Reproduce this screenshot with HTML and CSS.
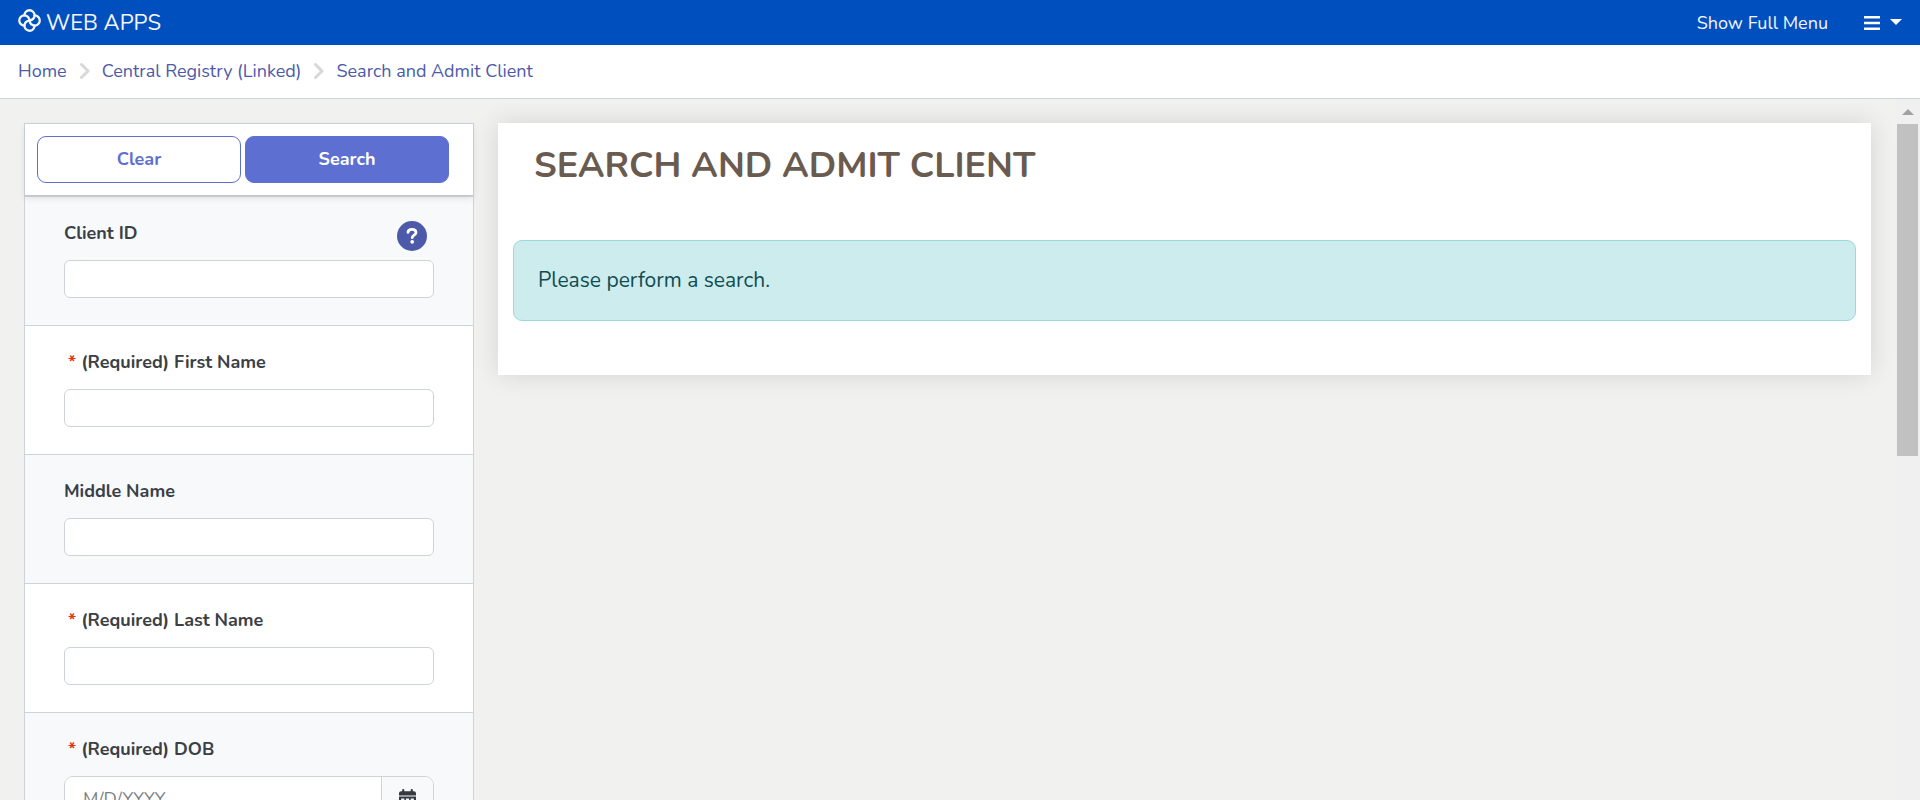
FILE: index.html
```html
<!DOCTYPE html>
<html lang="en">
<head>
<meta charset="utf-8">
<meta name="viewport" content="width=device-width, initial-scale=1">
<title>Search and Admit Client</title>
<link rel="stylesheet" href="styles.css">
</head>
<body>
<header class="topbar">
  <a class="brand" href="#">
    <svg class="brand-logo" viewBox="0 0 24 24" aria-hidden="true">
      <g fill="none" stroke="currentColor" stroke-width="2.4" stroke-linecap="round">
        <path d="M6.700 6.700A5.300 5.300 0 1 1 12 11.900"/>
        <path d="M17.300 6.700A5.300 5.300 0 1 1 12.100 12"/>
        <path d="M17.300 17.300A5.300 5.300 0 1 1 12 12.100"/>
        <path d="M6.700 17.300A5.300 5.300 0 1 1 11.900 12"/>
      </g>
    </svg>
    <span>WEB APPS</span>
  </a>
  <nav class="top-actions" aria-label="Main">
    <a class="full-menu" href="#">Show Full Menu</a>
    <button class="menu-toggle" type="button" aria-label="Menu">
      <svg class="bars" viewBox="0 0 16 14" aria-hidden="true"><path d="M0 0h16v2.500H0zM0 5.800h16v2.500H0zM0 11.500h16v2.500H0z" fill="currentColor"/></svg>
      <svg class="caret" viewBox="0 0 12 6" aria-hidden="true"><path d="M0 0h12L6 6z" fill="currentColor"/></svg>
    </button>
  </nav>
</header>
<nav class="crumbs" aria-label="Breadcrumb">
  <a href="#">Home</a>
  <svg class="chevron" viewBox="0 0 11 16" aria-hidden="true"><path d="M2.500 1.500L9 8l-6.500 6.500"/></svg>
  <a href="#">Central Registry (Linked)</a>
  <svg class="chevron" viewBox="0 0 11 16" aria-hidden="true"><path d="M2.500 1.500L9 8l-6.500 6.500"/></svg>
  <a href="#">Search and Admit Client</a>
</nav>
<div class="workspace">
  <form class="search-panel">
    <div class="panel-actions">
      <button class="btn btn-outline" type="reset">Clear</button>
      <button class="btn btn-solid" type="button">Search</button>
    </div>
    <div class="field">
      <div class="field-head">
        <label for="client-id">Client ID</label>
        <button class="help" type="button" aria-label="Help">
          <svg viewBox="0 0 30 30" aria-hidden="true">
            <circle cx="15" cy="15" r="15" fill="currentColor"/>
            <path d="M11 11.400C11 8.800 12.800 8.300 15 8.300c2.500 0 4 1.300 4 3.200 0 2.600-3.800 2.600-3.800 5.200" fill="none" stroke="#fff" stroke-width="2.800" stroke-linecap="round"/>
            <circle cx="15.200" cy="20.800" r="1.900" fill="#fff"/>
          </svg>
        </button>
      </div>
      <input class="text-input" id="client-id" type="text">
    </div>
    <div class="field">
      <div class="field-head"><label for="first-name"><span class="star">*</span>(Required) First Name</label></div>
      <input class="text-input" id="first-name" type="text">
    </div>
    <div class="field">
      <div class="field-head"><label for="middle-name">Middle Name</label></div>
      <input class="text-input" id="middle-name" type="text">
    </div>
    <div class="field">
      <div class="field-head"><label for="last-name"><span class="star">*</span>(Required) Last Name</label></div>
      <input class="text-input" id="last-name" type="text">
    </div>
    <div class="field">
      <div class="field-head"><label for="dob"><span class="star">*</span>(Required) DOB</label></div>
      <div class="date-group">
        <input class="date-input" id="dob" type="text" placeholder="M/D/YYYY">
        <button class="date-button" type="button" aria-label="Choose date">
          <svg viewBox="0 0 16 18" aria-hidden="true"><path fill="currentColor" fill-rule="evenodd" d="M0 6V4q0-2 2-2h1V1q0-1 1-1t1 1v1h6V1q0-1 1-1t1 1v1h1q2 0 2 2v2zM0 7h16v9q0 2-2 2H2q-2 0-2-2zM2 9v2h3V9zm4.500 0v2h3V9zM11 9v2h3V9zM2 13v2h3v-2zm4.500 0v2h3v-2zm4.500 0v2h3v-2z"/></svg>
        </button>
      </div>
    </div>
  </form>
  <main class="results">
    <h1>SEARCH AND ADMIT CLIENT</h1>
    <p class="notice" role="status">Please perform a search.</p>
  </main>
  <div class="scroll-track" aria-hidden="true">
    <svg class="scroll-arrow" viewBox="0 0 12 6"><path d="M0 6L6 0l6 6z" fill="currentColor"/></svg>
    <div class="scroll-thumb"></div>
  </div>
</div>
</body>
</html>
```

FILE: styles.css
```css
* {
  box-sizing: border-box;
}

body {
  margin: 0;
  height: 100vh;
  display: flex;
  flex-direction: column;
  overflow: hidden;
  background: #f1f1ef;
  color: #3a4046;
  font-family: Nunito, Lato, "Noto Sans", sans-serif;
  font-size: 18px;
  line-height: 24px;
}

a {
  color: inherit;
  text-decoration: none;
}

button,
input {
  font: inherit;
}

svg {
  display: block;
}

.topbar {
  flex: none;
  display: flex;
  align-items: center;
  justify-content: space-between;
  min-height: 45px;
  padding: 0 18px;
  background: #004fbe;
  color: #f4f6fa;
}

.brand {
  display: flex;
  align-items: center;
  gap: 5px;
  font-size: 22px;
  line-height: 26px;
}

.brand-logo {
  width: 23px;
  height: 23px;
  margin-bottom: 4px;
}

.top-actions {
  display: flex;
  align-items: center;
  gap: 36px;
}

.menu-toggle {
  display: flex;
  align-items: center;
  gap: 10px;
  padding: 0;
  border: 0;
  background: none;
  color: #fff;
}

.bars {
  width: 16px;
  height: 14px;
}

.caret {
  width: 12px;
  height: 6px;
  margin-bottom: 2px;
}

.crumbs {
  flex: none;
  display: flex;
  align-items: center;
  gap: 12px;
  min-height: 54px;
  padding: 0 18px 2px;
  border-bottom: 1px solid #ced3da;
  background: #fff;
  color: #4c5aa9;
}

.chevron {
  width: 11px;
  height: 16px;
  fill: none;
  stroke: #d8d8d8;
  stroke-width: 3;
  stroke-linecap: round;
  stroke-linejoin: round;
}

.workspace {
  flex: 1;
  min-height: 0;
  display: grid;
  grid-template-columns: 1fr 3fr 24px;
  align-items: start;
  overflow: hidden;
}

.search-panel {
  margin: 24px 0 0 24px;
  border: 1px solid #ced3da;
  background: #fff;
}

.panel-actions {
  position: relative;
  display: grid;
  grid-template-columns: 1fr 1fr;
  gap: 4px;
  padding: 12px 24px 12px 12px;
  border-bottom: 2px solid #c3cbd1;
  box-shadow: 0 2px 6px rgba(60, 80, 90, 0.12);
}

.btn {
  height: 47px;
  padding: 0 12px 2px;
  border: 1px solid #5d6fd1;
  border-radius: 9px;
  font-weight: 700;
}

.btn-outline {
  background: #fff;
  color: #5d6fd1;
}

.btn-solid {
  background: #5d6fd1;
  color: #fff;
}

.field {
  padding: 24px 39px 27px;
  border-bottom: 1px solid #ced3da;
}

.field:nth-child(even) {
  background: #f8f9fb;
}

.field-head {
  display: flex;
  align-items: flex-start;
  justify-content: space-between;
  height: 39px;
  padding-right: 7px;
  font-weight: 700;
  line-height: 25px;
}

.star {
  margin: 0 5px 0 4px;
  color: #e2311d;
}

.help {
  width: 30px;
  height: 30px;
  padding: 0;
  border: 0;
  background: none;
  color: #4c5aa9;
}

.text-input {
  display: block;
  width: 100%;
  height: 38px;
  padding: 0 16px;
  border: 1px solid #ced3da;
  border-radius: 6px;
  background: #fff;
}

.date-group {
  display: flex;
  height: 46px;
  border: 1px solid #ced3da;
  border-radius: 9px;
  overflow: hidden;
}

.date-input {
  flex: 1;
  min-width: 0;
  padding: 0 18px;
  border: 0;
  background: #fff;
}

.date-input::placeholder {
  color: #7b7f85;
}

.date-button {
  width: 52px;
  padding: 0 17px;
  border: 0;
  border-left: 1px solid #ced3da;
  background: #f8f9fb;
  color: #343a40;
}

.results {
  margin: 24px 25px 0 24px;
  padding: 18px 15px 54px;
  background: #fff;
  box-shadow: 0 0 24px rgba(0, 0, 0, 0.12);
}

h1 {
  margin: 0 21px 49px;
  color: #6a5b50;
  font-size: 36px;
  font-weight: 700;
  line-height: 50px;
}

.notice {
  margin: 0;
  padding: 24px;
  border: 1px solid #99dadb;
  border-radius: 9px;
  background: #cdecee;
  color: #104c50;
  font-size: 21px;
  line-height: 31px;
}

.scroll-track {
  align-self: stretch;
  display: flex;
  flex-direction: column;
  padding: 10px 2px 0 1px;
  background: #f0f0f1;
  color: #a2a2a2;
}

.scroll-arrow {
  align-self: center;
  width: 12px;
  height: 6px;
}

.scroll-thumb {
  height: 332px;
  margin-top: 9px;
  background: #c1c1c1;
}
```
